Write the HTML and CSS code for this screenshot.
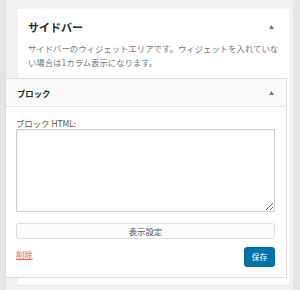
FILE: index.html
```html
<!DOCTYPE html>
<html lang="ja">

<head>
    <meta charset="UTF-8">
    <title>ウィジェット</title>
    <link rel="stylesheet" href="styles.css">
</head>

<body>
    <!--ウィジェットエリア-->
    <div class="wrap">
        <!--サイドバー-->
        <section class="sidebar">
            <div class="side-head">
                <h2 class="side-title">サイドバー</h2>
                <svg class="arrow" width="5" height="4" viewBox="0 0 5 4">
                    <path d="M0 4 L2.5 0 L5 4 Z" fill="#72777c"/>
                </svg>
            </div>
            <p class="side-desc">サイドバーのウィジェットエリアです。ウィジェットを入れていない場合は1カラム表示になります。</p>

            <!--ブロックウィジェット-->
            <div class="widget">
                <div class="widget-top">
                    <h3 class="widget-title">ブロック</h3>
                    <svg class="arrow" width="5" height="4" viewBox="0 0 5 4">
                        <path d="M0 4 L2.5 0 L5 4 Z" fill="#72777c"/>
                    </svg>
                </div>
                <div class="widget-inside">
                    <label class="label" for="html">ブロック HTML:</label>
                    <textarea id="html" class="code"></textarea>
                    <button class="btn-display" type="button">表示設定</button>
                    <div class="actions">
                        <a href="" class="delete">削除</a>
                        <button class="btn-save" type="button">保存</button>
                    </div>
                </div>
            </div>
        </section>
    </div>
</body>

</html>
```

FILE: styles.css
```css
html,
body,
h2,
h3,
p {
    margin: 0;
    padding: 0;
}

body {
    background: #e5e5e5;
    font-family: "Noto Sans CJK JP", "Liberation Sans", sans-serif;
    color: #23282d;
}

/*ウィジェットエリア*/
.wrap {
    width: 288px;
    height: 290px;
    margin-left: 5px;
    padding-top: 9px;
    box-sizing: border-box;
    background: #f1f1f1;
    border-left: 1px solid #e2e2e2;
}

/*サイドバー*/
.sidebar {
    width: 271px;
    margin-left: 12px;
    padding-bottom: 7px;
    background: #fff;
    border-bottom: 1px solid #e2e2e2;
    box-sizing: border-box;
}

.side-head {
    display: flex;
    justify-content: space-between;
    align-items: center;
    padding: 10px 15px 0 10px;
}

.side-title {
    font-size: 11px;
    line-height: 16px;
    font-weight: bold;
}

.side-desc {
    width: 255px;
    margin-top: 6px;
    padding-left: 10px;
    color: #72777c;
    font-size: 8.4px;
    line-height: 14px;
}

/*ブロック*/
.widget {
    width: 282px;
    margin: 9px 0 0 -13px;
    background: #fff;
    border: 1px solid #dcdcdc;
    box-sizing: border-box;
}

.widget-top {
    display: flex;
    justify-content: space-between;
    align-items: center;
    height: 27px;
    padding: 0 12px 0 11px;
    background: #fafafa;
    border-bottom: 1px solid #e5e5e5;
}

.widget-title {
    font-size: 8.4px;
    font-weight: bold;
}

.widget-inside {
    display: flex;
    flex-direction: column;
    padding: 10px 11px 10px 10px;
}

.label {
    font-size: 8.4px;
    line-height: 12px;
    color: #555;
}

.code {
    width: 259px;
    height: 83px;
    margin: 0;
    border: 1px solid #ccc;
    border-radius: 1px;
    box-shadow: inset 0 1px 2px rgba(0, 0, 0, .07);
    box-sizing: border-box;
    resize: vertical;
}

.btn-display {
    width: 259px;
    height: 16px;
    margin-top: 11px;
    padding: 0;
    background: #fcfcfc;
    border: 1px solid #ddd;
    border-radius: 3px;
    color: #555;
    font: 8.4px/14px "Noto Sans CJK JP", "Liberation Sans", sans-serif;
}

.actions {
    display: flex;
    justify-content: space-between;
    align-items: flex-start;
    width: 259px;
    margin-top: 8px;
}

.delete {
    color: #d66;
    font-size: 8.4px;
    line-height: 14px;
}

.btn-save {
    width: 31px;
    height: 20px;
    padding: 0;
    background: #0073aa;
    border: 1px solid #006799;
    border-radius: 3px;
    color: #fff;
    font: 8px/18px "Noto Sans CJK JP", "Liberation Sans", sans-serif;
}
```
